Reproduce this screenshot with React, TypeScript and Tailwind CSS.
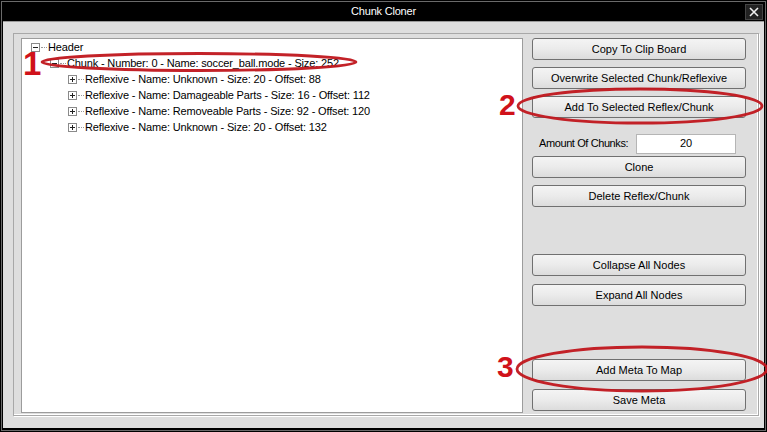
import React from "react";

const font = { fontFamily: '"Liberation Sans", Arial, sans-serif' };

function Expander({ open }: { open: boolean }) {
  return (
    <span className="relative inline-flex h-[9px] w-[9px] items-center justify-center border border-[#8a8a8a] bg-white">
      <span className="absolute h-[1px] w-[5px] bg-[#222]" />
      {!open && <span className="absolute h-[5px] w-[1px] bg-[#222]" />}
    </span>
  );
}

function TreeRow({ indent, open, text }: { indent: number; open: boolean; text: string }) {
  return (
    <div className="flex h-[16px] items-center" style={{ paddingLeft: indent }}>
      <Expander open={open} />
      <span className="mx-[1px] w-[6px] border-t border-dotted border-[#999]" />
      <span className="whitespace-nowrap text-[11px] tracking-[-0.15px] text-black">{text}</span>
    </div>
  );
}

function Btn({ label, className = "" }: { label: string; className?: string }) {
  return (
    <div
      className={
        "flex h-[22px] w-[214px] items-center justify-center rounded-[3px] border border-[#707070] bg-gradient-to-b from-[#f4f4f4] via-[#ebebeb] to-[#dcdcdc] text-[11px] text-black " +
        className
      }
    >
      {label}
    </div>
  );
}

export default function App() {
  return (
    <div className="relative h-[432px] w-[767px] bg-black p-[1px]" style={font}>
      <div className="flex h-full flex-col border border-[#6a6a6a]">
        {/* title bar */}
        <div className="relative flex h-[19px] items-center justify-center bg-black">
          <span className="text-[11px] tracking-[-0.2px] text-white">Chunk Cloner</span>
          <div className="absolute right-[2px] top-[2px] flex h-[16px] w-[18px] items-center justify-center border border-[#444] bg-[#222]">
            <svg width="12" height="12" viewBox="0 0 12 12">
              <path d="M2 2 L10 10 M10 2 L2 10" stroke="#f0f0f0" strokeWidth="1.6" />
            </svg>
          </div>
        </div>

        {/* client area */}
        <div className="mx-[1px] mb-[2px] flex-1 border-t border-[#9a9a9a] bg-[#dedede] pb-[12px] pl-[10px] pr-[5px] pt-[11px]">
          <div className="flex h-full border border-[#a8a8a8] pb-[1px] pl-[7px] pr-[9px] pt-[4px] shadow-[inset_-1px_-1px_0_#ffffff,1px_1px_0_#ffffff]">
            {/* tree view */}
            <div className="h-[375px] w-[502px] border border-[#9c9c9c] bg-white pl-[9px]">
              <TreeRow indent={0} open text="Header" />
              <TreeRow indent={19} open text="Chunk - Number: 0 - Name: soccer_ball.mode - Size: 252" />
              <TreeRow indent={37} open={false} text="Reflexive - Name: Unknown - Size: 20 - Offset: 88" />
              <TreeRow indent={37} open={false} text="Reflexive - Name: Damageable Parts - Size: 16 - Offset: 112" />
              <TreeRow indent={37} open={false} text="Reflexive - Name: Removeable Parts - Size: 92 - Offset: 120" />
              <TreeRow indent={37} open={false} text="Reflexive - Name: Unknown - Size: 20 - Offset: 132" />
            </div>

            {/* buttons */}
            <div className="ml-[9px] flex flex-col">
              <Btn label="Copy To Clip Board" />
              <Btn label="Overwrite Selected Chunk/Reflexive" className="mt-[7px]" />
              <Btn label="Add To Selected Reflex/Chunk" className="mt-[7px]" />
              <div className="mt-[15px] flex h-[21px] items-center">
                <span className="ml-[7px] text-[11px] tracking-[-0.4px] text-black">Amount Of Chunks:</span>
                <div className="ml-auto mr-[10px] flex h-[20px] w-[100px] items-center justify-center border border-[#b5b5b5] bg-white text-[11px] text-black">
                  20
                </div>
              </div>
              <Btn label="Clone" className="mt-[2px]" />
              <Btn label="Delete Reflex/Chunk" className="mt-[7px]" />
              <Btn label="Collapse All Nodes" className="mt-[47px]" />
              <Btn label="Expand All Nodes" className="mt-[8px]" />
              <Btn label="Add Meta To Map" className="mt-[53px]" />
              <Btn label="Save Meta" className="mt-[8px]" />
            </div>
          </div>
        </div>
      </div>

      {/* red annotations */}
      <svg className="pointer-events-none absolute left-0 top-0" width="767" height="432" viewBox="0 0 767 432">
        <g fill="none" stroke="#c0161c" strokeWidth="2.8" opacity="0.95">
          <ellipse cx="199" cy="62" rx="157" ry="8.5" />
          <ellipse cx="640" cy="106" rx="122" ry="17" />
          <ellipse cx="642" cy="369" rx="125" ry="22" />
        </g>
      </svg>
      <span className="absolute left-[23px] top-[47px] text-[33px] font-bold leading-none text-[#d0121a]">1</span>
      <span className="absolute left-[499px] top-[90px] text-[30px] font-bold leading-none text-[#d0121a]">2</span>
      <span className="absolute left-[497px] top-[352px] text-[30px] font-bold leading-none text-[#d0121a]">3</span>
    </div>
  );
}
